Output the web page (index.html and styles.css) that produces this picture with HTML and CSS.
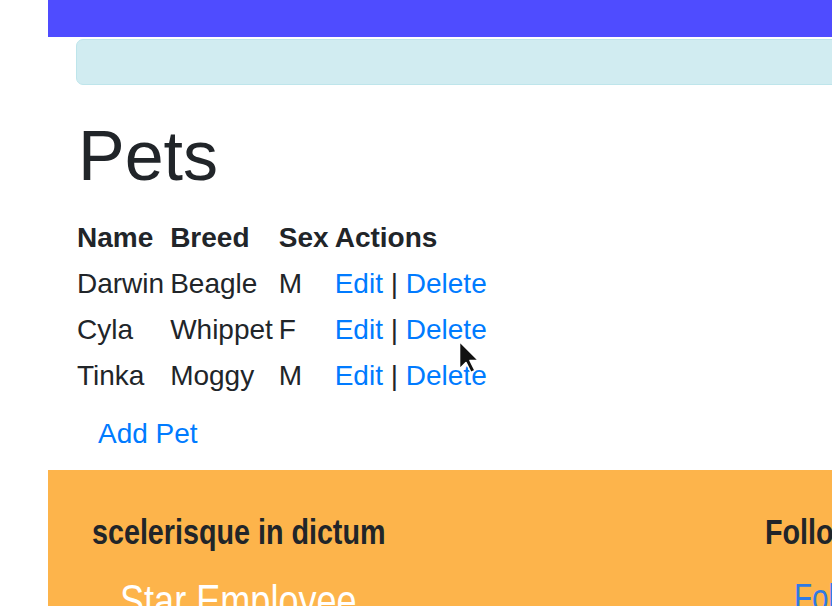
FILE: index.html
```html
<!DOCTYPE html>
<html>
<head>
<meta charset="utf-8">
<link rel="stylesheet" href="styles.css">
</head>
<body>
<div class="page">
  <nav class="navbar"></nav>
  <main class="main">
    <div class="alert"></div>
    <h1 class="title">Pets</h1>
    <table class="pets">
      <thead>
        <tr><th>Name</th><th>Breed</th><th>Sex</th><th>Actions</th></tr>
      </thead>
      <tbody>
        <tr><td>Darwin</td><td>Beagle</td><td>M</td><td><a href="#">Edit</a> | <a href="#">Delete</a></td></tr>
        <tr><td>Cyla</td><td>Whippet</td><td>F</td><td><a href="#">Edit</a> | <a href="#">Delete</a></td></tr>
        <tr><td>Tinka</td><td>Moggy</td><td>M</td><td><a href="#">Edit</a> | <a href="#">Delete</a></td></tr>
      </tbody>
    </table>
    <div class="actions"><a href="#" class="btn-link">Add Pet</a></div>
  </main>
  <footer class="footer">
    <div class="col col-left">
      <h5 class="foot-title"><span class="narrow">scelerisque in dictum</span></h5>
      <ul class="foot-list"><li class="star"><span class="narrow">Star Employee</span></li></ul>
    </div>
    <div class="col col-right">
      <h5 class="foot-title"><span class="narrow">Follow us</span></h5>
      <ul class="foot-list foot-list-links"><li><a href="#" class="foot-link"><span class="narrow">Follow</span></a></li></ul>
    </div>
  </footer>
</div>
<svg class="cursor" width="24" height="36" viewBox="0 0 24 36">
  <path d="M1.5 1.5 L1.5 29 L8 22.5 L13 32.5 L17 30.5 L12 20.5 L20.5 20.5 Z" fill="#111" stroke="#fff" stroke-width="1.6" stroke-linejoin="round"/>
</svg>
</body>
</html>
```
FILE: styles.css
```css
html, body {
  margin: 0;
  padding: 0;
  overflow: hidden;
  background: #fff;
}
body {
  font-family: "Liberation Sans", Arial, sans-serif;
  font-size: 28px;
  line-height: 1.5;
  color: #212529;
  width: 832px;
  height: 606px;
  position: relative;
}
.page {
  margin-left: 48px;
  width: 1100px;
}
.navbar {
  height: 37px;
  background: #4f4cff;
}
.main {
  padding: 2px 28px 0 28px;
}
.alert {
  height: 44px;
  background: #d1ecf1;
  border: 1px solid #bee5eb;
  border-radius: 7px;
  margin-bottom: 29px;
}
.title {
  font-size: 70px;
  font-weight: 500;
  line-height: 1.2;
  margin: 0 0 16px 2px;
  color: #212529;
}
.pets {
  border-collapse: separate;
  border-spacing: 2px;
  margin-left: -3px;
}
.pets th, .pets td {
  padding: 1px 2px;
  text-align: left;
  line-height: 42px;
  white-space: nowrap;
}
.pets th {
  font-weight: bold;
}
a {
  color: #007bff;
  text-decoration: none;
}
.actions {
  margin-top: 1px;
}
.btn-link {
  display: inline-block;
  padding: 10.5px 21px;
  border: 1px solid transparent;
  line-height: 42px;
}
.footer {
  margin-top: 4px;
  background: #fdb44b;
  height: 200px;
  display: flex;
  padding: 41px 44px 0 44px;
  box-sizing: border-box;
}
.col-left {
  width: 673px;
}
.narrow {
  display: inline-block;
  transform: scaleX(0.82);
  transform-origin: left center;
  white-space: nowrap;
}
.foot-title {
  font-family: "Liberation Sans", sans-serif;
  font-size: 35px;
  line-height: 42px;
  font-weight: bold;
  margin: 0 0 22px 0;
  color: #212529;
  white-space: nowrap;
}
.foot-list {
  list-style: none;
  margin: 0;
  padding-left: 28px;
  font-family: "Liberation Sans", sans-serif;
  font-size: 44px;
  line-height: 52px;
  white-space: nowrap;
}
.foot-list-links {
  font-size: 36px;
  margin-top: -3px;
  padding-left: 29px;
}
.star {
  color: #fff;
}
.foot-link {
  color: #2f7ae5;
}
.cursor {
  position: absolute;
  left: 458px;
  top: 340px;
}
```
